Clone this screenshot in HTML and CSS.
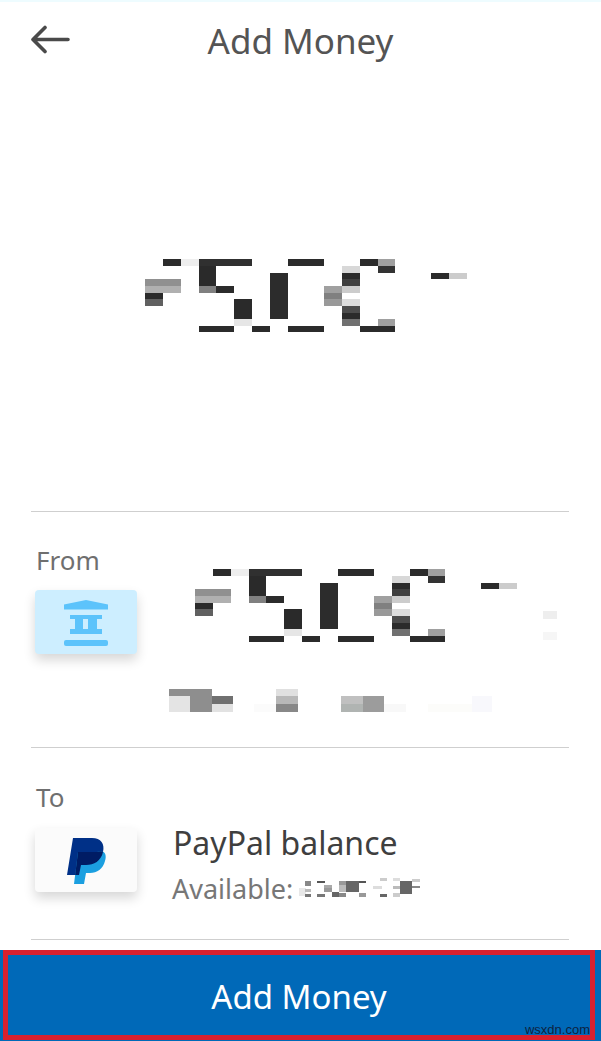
FILE: index.html
```html
<!DOCTYPE html>
<html>
<head>
    <meta charset="UTF-8">
    <title>Add Money</title>
    <link rel="stylesheet" href="styles.css">
</head>
<body>
    <div class="page">
        <header class="top-bar">
            <svg class="back-arrow" width="40" height="30" viewBox="0 0 40 30">
                <path d="M38 14.5H3M15 2.5L3 14.5L15 26.5" fill="none" stroke="#4a4a4a" stroke-width="3.6" stroke-linecap="round" stroke-linejoin="round"/>
            </svg>
            <h1 class="title">Add Money</h1>
        </header>

        <div class="hero">
            <svg class="amount-blur" width="323" height="74" viewBox="145 259 323 74" shape-rendering="crispEdges">
                <g id="amount">
                    <rect x="163" y="259" width="18" height="7" fill="#2b2b2b"/>
                    <rect x="181" y="259" width="18" height="7" fill="#eeeeee"/>
                    <rect x="199" y="259" width="53" height="7" fill="#303030"/>
                    <rect x="199" y="266" width="17" height="20" fill="#2a2a2a"/>
                    <rect x="199" y="286" width="17" height="7" fill="#808080"/>
                    <rect x="216" y="286" width="18" height="7" fill="#2b2b2b"/>
                    <rect x="234" y="299" width="18" height="20" fill="#2a2a2a"/>
                    <rect x="234" y="319" width="18" height="7" fill="#e6e6e6"/>
                    <rect x="199" y="326" width="35" height="6" fill="#2b2b2b"/>
                    <rect x="252" y="326" width="18" height="6" fill="#2b2b2b"/>
                    <rect x="288" y="259" width="36" height="7" fill="#2b2b2b"/>
                    <rect x="288" y="326" width="36" height="6" fill="#2b2b2b"/>
                    <rect x="270" y="273" width="18" height="46" fill="#2c2c2c"/>
                    <rect x="145" y="279" width="36" height="7" fill="#909090"/>
                    <rect x="145" y="286" width="36" height="7" fill="#b0b0b0"/>
                    <rect x="145" y="293" width="18" height="6" fill="#2b2b2b"/>
                    <rect x="145" y="299" width="18" height="7" fill="#606060"/>
                    <rect x="324" y="286" width="18" height="7" fill="#a0a0a0"/>
                    <rect x="324" y="293" width="18" height="6" fill="#808080"/>
                    <rect x="324" y="299" width="18" height="7" fill="#999999"/>
                    <rect x="342" y="266" width="18" height="7" fill="#d8d8d8"/>
                    <rect x="342" y="273" width="18" height="6" fill="#2b2b2b"/>
                    <rect x="342" y="279" width="18" height="7" fill="#404040"/>
                    <rect x="342" y="286" width="18" height="7" fill="#cccccc"/>
                    <rect x="342" y="299" width="18" height="7" fill="#dddddd"/>
                    <rect x="342" y="306" width="18" height="7" fill="#4c4c4c"/>
                    <rect x="342" y="313" width="18" height="6" fill="#2b2b2b"/>
                    <rect x="342" y="319" width="18" height="7" fill="#707070"/>
                    <rect x="360" y="259" width="18" height="7" fill="#2b2b2b"/>
                    <rect x="378" y="259" width="17" height="7" fill="#a0a0a0"/>
                    <rect x="378" y="266" width="17" height="7" fill="#333333"/>
                    <rect x="378" y="319" width="17" height="7" fill="#a0a0a0"/>
                    <rect x="360" y="326" width="35" height="6" fill="#2b2b2b"/>
                    <rect x="431" y="273" width="18" height="6" fill="#2b2b2b"/>
                    <rect x="449" y="273" width="18" height="6" fill="#cccccc"/>
                </g>
            </svg>
        </div>

        <section class="transfer from">
            <div class="side">
                <div class="label">From</div>
                <div class="logo-box bank">
                    <svg width="102" height="64" viewBox="0 0 102 64">
                        <g fill="#5cc3fb">
                            <path d="M29 14.5L51 10L73 14.5V19.5H29Z"/>
                            <path d="M35 25H67V29H62V39H67V44H35V39H40V29H35ZM48 29V39H53V29Z" fill-rule="evenodd"/>
                            <rect x="29" y="50" width="44" height="6" rx="2"/>
                        </g>
                    </svg>
                </div>
            </div>
            <svg class="from-blur" width="388" height="143" viewBox="169 569 388 143" shape-rendering="crispEdges">
                <use href="#amount" x="50" y="310"/>
                <rect x="543" y="611" width="14" height="8" fill="#eeeeee"/>
                <rect x="543" y="632" width="14" height="8" fill="#f6f6f6"/>
                <rect x="169" y="689" width="43" height="7" fill="#8e8e8e"/>
                <rect x="169" y="696" width="21" height="16" fill="#e4e4e4"/>
                <rect x="190" y="696" width="22" height="16" fill="#8e8e8e"/>
                <rect x="212" y="696" width="21" height="8" fill="#707070"/>
                <rect x="212" y="704" width="21" height="8" fill="#e2e2e2"/>
                <rect x="254" y="704" width="22" height="8" fill="#fbfbfb"/>
                <rect x="276" y="689" width="22" height="7" fill="#e0e0e0"/>
                <rect x="276" y="696" width="22" height="8" fill="#b8b8b8"/>
                <rect x="276" y="704" width="22" height="8" fill="#888888"/>
                <rect x="341" y="696" width="22" height="8" fill="#c0c0c0"/>
                <rect x="341" y="704" width="22" height="8" fill="#b0b4b2"/>
                <rect x="363" y="696" width="21" height="16" fill="#9c9c9c"/>
                <rect x="384" y="704" width="22" height="8" fill="#f8f8f8"/>
                <rect x="428" y="704" width="44" height="8" fill="#fcfcfa"/>
                <rect x="472" y="696" width="20" height="16" fill="#f8f8fc"/>
            </svg>
        </section>

        <section class="transfer to">
            <div class="side">
                <div class="label">To</div>
                <div class="logo-box paypal">
                    <svg width="102" height="64" viewBox="0 0 102 64">
                        <defs>
                            <clipPath id="backP">
                                <path d="M38 10H57C66 10 70 16 68 24C66 33 59 37 51 37H46L44 47H32Z"/>
                            </clipPath>
                        </defs>
                        <path d="M38 10H57C66 10 70 16 68 24C66 33 59 37 51 37H46L44 47H32Z" fill="#003087"/>
                        <path d="M43 24H62C70 21 72 27 70 33C68 41 62 45 55 45H51L49 56H39Z" fill="#1b9fe0"/>
                        <path d="M43 24H62C70 21 72 27 70 33C68 41 62 45 55 45H51L49 56H39Z" fill="#001c64" clip-path="url(#backP)"/>
                    </svg>
                </div>
            </div>
            <div class="account">
                <div class="account-name">PayPal balance</div>
                <div class="account-balance">
                    <span>Available:</span>
                    <svg width="125" height="22" viewBox="300 879 125 22" shape-rendering="crispEdges">
                        <rect x="300" y="889" width="7" height="8" fill="#e8e8e8"/>
                        <rect x="306" y="882" width="6" height="5" fill="#888888"/>
                        <rect x="306" y="890" width="6" height="3" fill="#bbbbbb"/>
                        <rect x="306" y="895" width="6" height="3" fill="#777777"/>
                        <rect x="318" y="882" width="8" height="2" fill="#555555"/>
                        <rect x="318" y="895" width="8" height="3" fill="#777777"/>
                        <rect x="325" y="886" width="8" height="3" fill="#aaaaaa"/>
                        <rect x="325" y="889" width="8" height="4" fill="#999999"/>
                        <rect x="333" y="893" width="7" height="5" fill="#666666"/>
                        <rect x="340" y="882" width="7" height="4" fill="#999999"/>
                        <rect x="340" y="886" width="7" height="7" fill="#bbbbbb"/>
                        <rect x="340" y="894" width="7" height="4" fill="#888888"/>
                        <rect x="347" y="882" width="13" height="11" fill="#666666"/>
                        <rect x="360" y="882" width="7" height="2" fill="#555555"/>
                        <rect x="360" y="894" width="7" height="4" fill="#999999"/>
                        <rect x="374" y="887" width="9" height="3" fill="#dddddd"/>
                        <rect x="381" y="879" width="7" height="3" fill="#cccccc"/>
                        <rect x="381" y="895" width="7" height="3" fill="#666666"/>
                        <rect x="394" y="879" width="7" height="3" fill="#dddddd"/>
                        <rect x="394" y="887" width="7" height="3" fill="#bbbbbb"/>
                        <rect x="394" y="894" width="7" height="4" fill="#cccccc"/>
                        <rect x="401" y="882" width="12" height="13" fill="#666666"/>
                        <rect x="413" y="880" width="8" height="3" fill="#cccccc"/>
                        <rect x="413" y="887" width="8" height="2" fill="#888888"/>
                    </svg>
                </div>
            </div>
        </section>

        <div class="divider"></div>

        <div class="btn-bar">
            <button class="add-btn">
                Add Money
                <span class="watermark">wsxdn.com</span>
            </button>
        </div>
    </div>
</body>
</html>
```

FILE: styles.css
```css
body {
    margin: 0;
    background: #fff;
    font-family: 'Noto Sans', sans-serif;
}

.page {
    width: 601px;
    height: 1041px;
    display: flex;
    flex-direction: column;
    overflow: hidden;
}

.top-bar {
    height: 76px;
    padding-bottom: 2px;
    border-top: 2px solid #eefcff;
    display: flex;
    align-items: center;
    justify-content: center;
    position: relative;
}

.back-arrow {
    position: absolute;
    left: 30px;
    top: 23px;
}

.title {
    margin: 0;
    font-size: 35px;
    font-weight: 400;
    color: #545454;
}

.hero {
    height: 431px;
    box-sizing: border-box;
    padding: 179px 0 0 145px;
}

.amount-blur,
.from-blur {
    display: block;
}

.transfer {
    margin: 0 32px 0 31px;
    box-sizing: border-box;
    border-top: 1px solid #cfcfcf;
    display: flex;
}

.from {
    height: 236px;
    padding: 33px 0 0 4px;
    gap: 32px;
}

.to {
    height: 192px;
    padding: 34px 0 0 4px;
    gap: 36px;
}

.side {
    width: 102px;
    flex-shrink: 0;
}

.label {
    height: 30px;
    line-height: 30px;
    padding-left: 1px;
    font-size: 26px;
    color: #6f6f6f;
}

.logo-box {
    width: 102px;
    height: 64px;
    border-radius: 4px;
    box-shadow: 0 6px 12px rgba(0,0,0,0.16);
}

.logo-box svg {
    display: block;
}

.from .logo-box {
    margin-top: 15px;
}

.to .logo-box {
    margin-top: 16px;
}

.bank {
    background: #cdeeff;
}

.paypal {
    background: #fbfbfb;
}

.from-blur {
    margin-top: 24px;
    flex-shrink: 0;
}

.account {
    margin-top: 39px;
}

.account-name {
    font-size: 32px;
    line-height: 44px;
    color: #3f3f3f;
}

.account-balance {
    display: flex;
    align-items: center;
    margin-top: 2px;
    margin-left: -1px;
    font-size: 27px;
    line-height: 44px;
    color: #777;
}

.account-balance svg {
    display: block;
    margin-left: 6px;
}

.divider {
    margin: 0 32px 0 31px;
    border-top: 1px solid #cfcfcf;
}

.btn-bar {
    margin-top: 10px;
    height: 91px;
    box-sizing: border-box;
    padding: 0 6px 1px 3px;
    background: #0069b8;
    display: flex;
}

.add-btn {
    flex: 1;
    box-sizing: border-box;
    border: 5px solid #d9202e;
    background: #0069b8;
    color: #fff;
    font-family: 'Noto Sans', sans-serif;
    font-size: 33px;
    position: relative;
    padding: 3px 0 0;
}

.watermark {
    position: absolute;
    right: 0;
    bottom: -2px;
    font-family: 'Liberation Sans', sans-serif;
    font-size: 13px;
    line-height: 15px;
    color: #0d2340;
}
```
